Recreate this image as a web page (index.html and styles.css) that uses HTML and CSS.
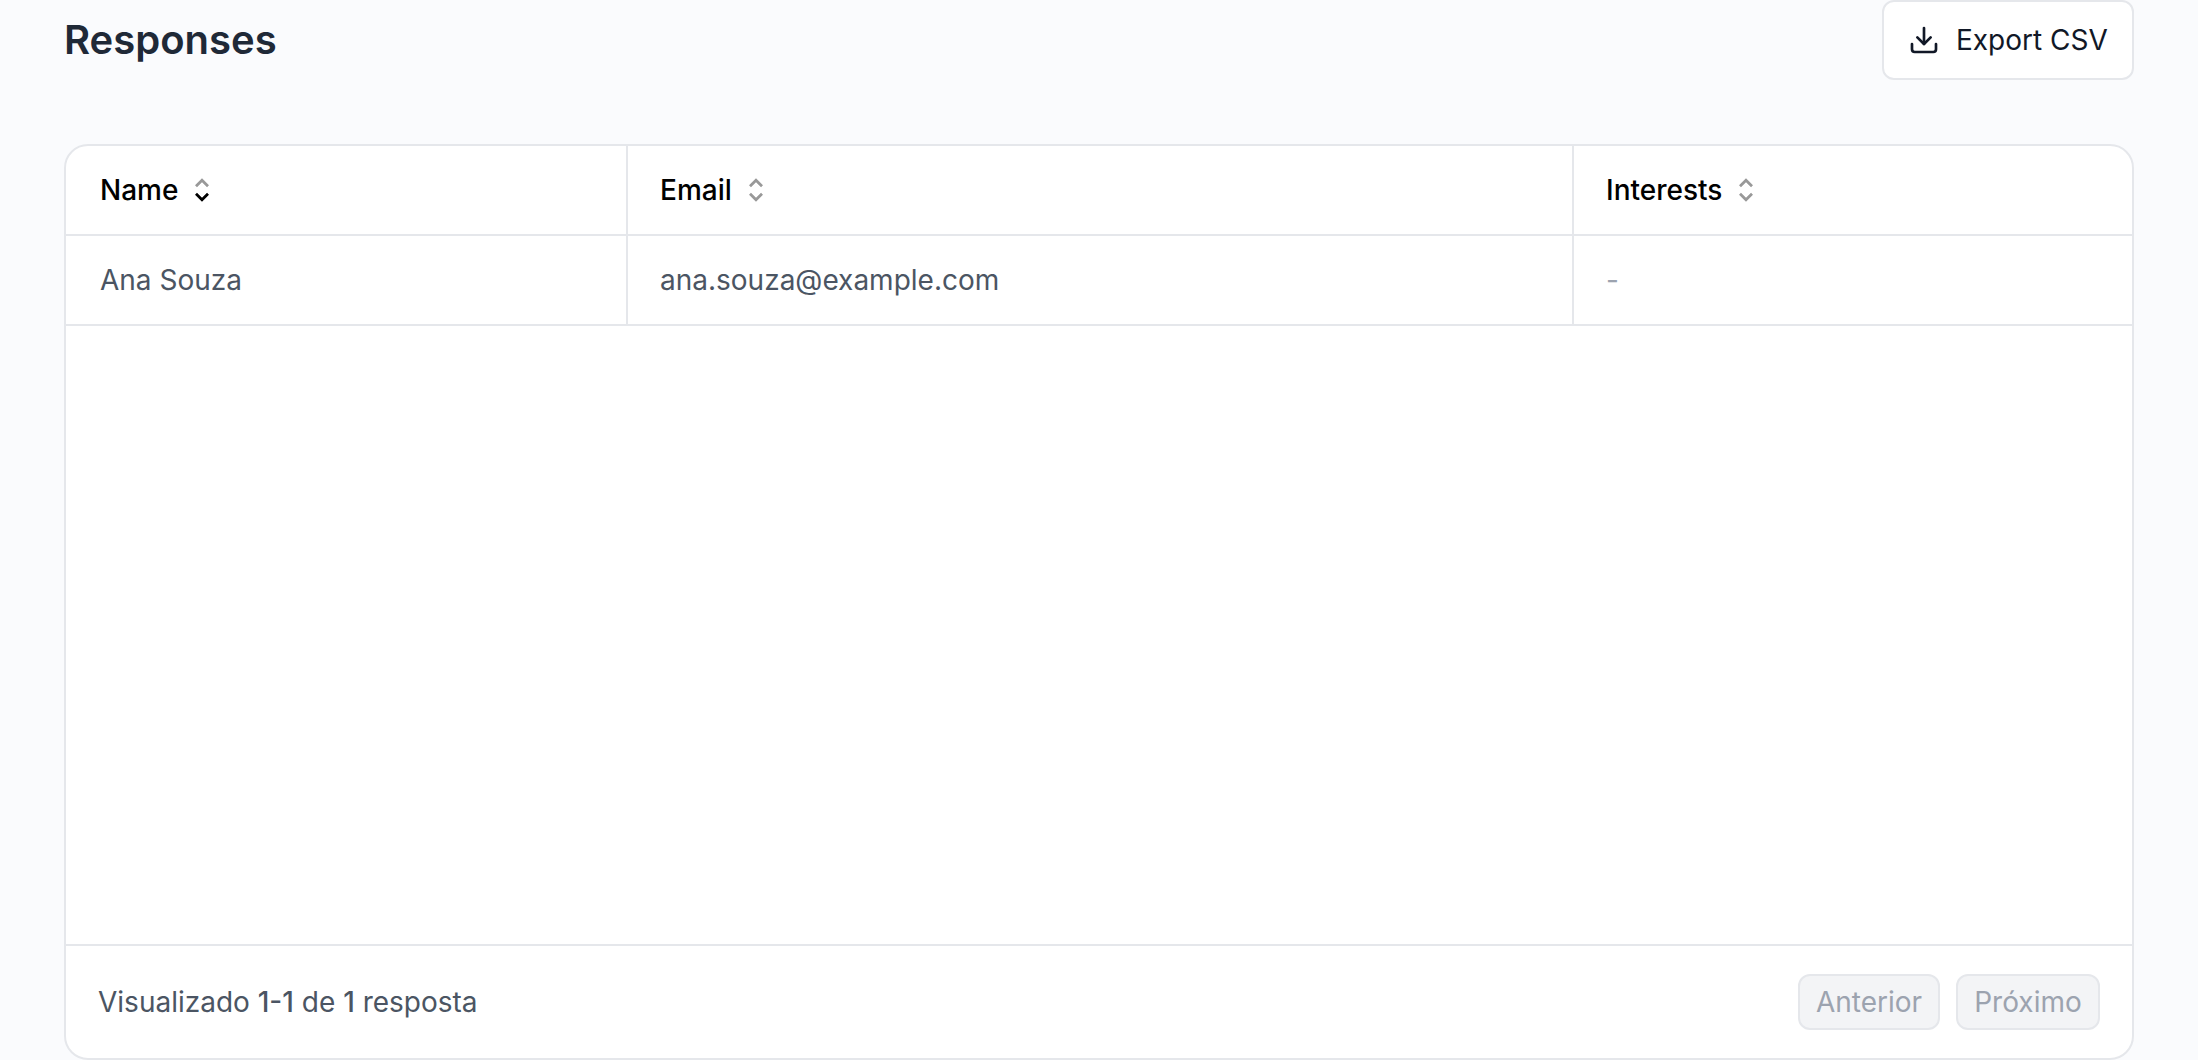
FILE: index.html
```html
<!DOCTYPE html>
<html lang="pt-BR">
<head>
  <meta charset="UTF-8" />
  <meta name="viewport" content="width=device-width, initial-scale=1.0"/>
  <title>Responses</title>
  <link rel="stylesheet" href="styles.css">
</head>
<body>
  <div class="page">
    <div class="page-header">
      <h1>Responses</h1>
      <button class="export-btn">
        <svg width="32" height="32" viewBox="0 0 24 24" fill="none" stroke="currentColor" stroke-width="2" stroke-linecap="round" stroke-linejoin="round">
          <path d="M21 15v4a2 2 0 0 1-2 2H5a2 2 0 0 1-2-2v-4"/>
          <path d="M7 10l5 5 5-5"/>
          <path d="M12 15V3"/>
        </svg>
        <span>Export CSV</span>
      </button>
    </div>

    <div class="card">
      <table class="responses">
        <thead>
          <tr>
            <th class="col-name">
              <div class="th-inner">
                <span>Name</span>
                <svg class="sort sort-desc" width="16" height="24" viewBox="0 0 16 24">
                  <path class="up" d="M2 8.2L8 2.2l6 6"/>
                  <path class="down" d="M2 15.8l6 6 6-6"/>
                </svg>
              </div>
            </th>
            <th class="col-email">
              <div class="th-inner">
                <span>Email</span>
                <svg class="sort" width="16" height="24" viewBox="0 0 16 24">
                  <path class="up" d="M2 8.2L8 2.2l6 6"/>
                  <path class="down" d="M2 15.8l6 6 6-6"/>
                </svg>
              </div>
            </th>
            <th class="col-interests">
              <div class="th-inner">
                <span>Interests</span>
                <svg class="sort" width="16" height="24" viewBox="0 0 16 24">
                  <path class="up" d="M2 8.2L8 2.2l6 6"/>
                  <path class="down" d="M2 15.8l6 6 6-6"/>
                </svg>
              </div>
            </th>
          </tr>
        </thead>
        <tbody>
          <tr>
            <td>Ana Souza</td>
            <td>ana.souza@example.com</td>
            <td class="empty">-</td>
          </tr>
        </tbody>
      </table>

      <div class="card-footer">
        <p>Visualizado <strong>1-1</strong> de <strong>1</strong> resposta</p>
        <div class="pager">
          <button class="prev" disabled>Anterior</button>
          <button class="next" disabled>Próximo</button>
        </div>
      </div>
    </div>
  </div>
</body>
</html>
```
FILE: styles.css
```css
* {
  box-sizing: border-box;
}
body {
  margin: 0;
  font-family: Inter, "Liberation Sans", sans-serif;
  font-size: 28px;
  line-height: 40px;
  background: #fafbfd;
  color: #4b5563;
}
button {
  font: inherit;
}
.page {
  display: flex;
  flex-direction: column;
  height: 100vh;
  padding: 0 64px;
}
.page-header {
  display: flex;
  justify-content: space-between;
  align-items: center;
  height: 80px;
  margin-bottom: 64px;
}
h1 {
  margin: 0;
  font-size: 40px;
  font-weight: 600;
  color: #1f2937;
}
.export-btn {
  display: flex;
  align-items: center;
  gap: 16px;
  width: 252px;
  height: 80px;
  padding: 0 24px;
  background: white;
  border: 2px solid #e5e7eb;
  border-radius: 12px;
  color: #111827;
  white-space: nowrap;
}
.card {
  display: flex;
  flex-direction: column;
  flex: 1;
  background: white;
  border: 2px solid #e5e7eb;
  border-radius: 24px;
  overflow: hidden;
}
.responses {
  width: 100%;
  table-layout: fixed;
  border-collapse: separate;
  border-spacing: 0;
}
.responses th,
.responses td {
  height: 90px;
  padding: 0 32px;
  border-bottom: 2px solid #e5e7eb;
  border-right: 2px solid #e5e7eb;
  text-align: left;
  font-weight: 400;
}
.responses th {
  color: black;
  font-weight: 500;
}
.responses th:first-child,
.responses td:first-child {
  padding-left: 34px;
}
.responses th:last-child,
.responses td:last-child {
  border-right: none;
}
.col-name {
  width: 562px;
}
.col-email {
  width: 946px;
}
.th-inner {
  display: flex;
  align-items: center;
  gap: 16px;
}
.sort {
  fill: none;
  stroke: #999;
  stroke-width: 2.8;
}
.sort-desc .down {
  stroke: black;
}
.responses .empty {
  color: #9ca3af;
}
.card-footer {
  display: flex;
  justify-content: space-between;
  align-items: center;
  height: 114px;
  margin-top: auto;
  padding: 0 32px;
  border-top: 2px solid #e5e7eb;
}
.card-footer p {
  margin: 0;
}
.card-footer strong {
  font-weight: 500;
}
.pager {
  display: flex;
  gap: 16px;
}
.pager button {
  height: 56px;
  padding: 0;
  background: #f3f4f6;
  border: 2px solid #e5e7eb;
  border-radius: 12px;
  color: #9ca3af;
}
.pager .prev {
  width: 142px;
}
.pager .next {
  width: 144px;
}
```
